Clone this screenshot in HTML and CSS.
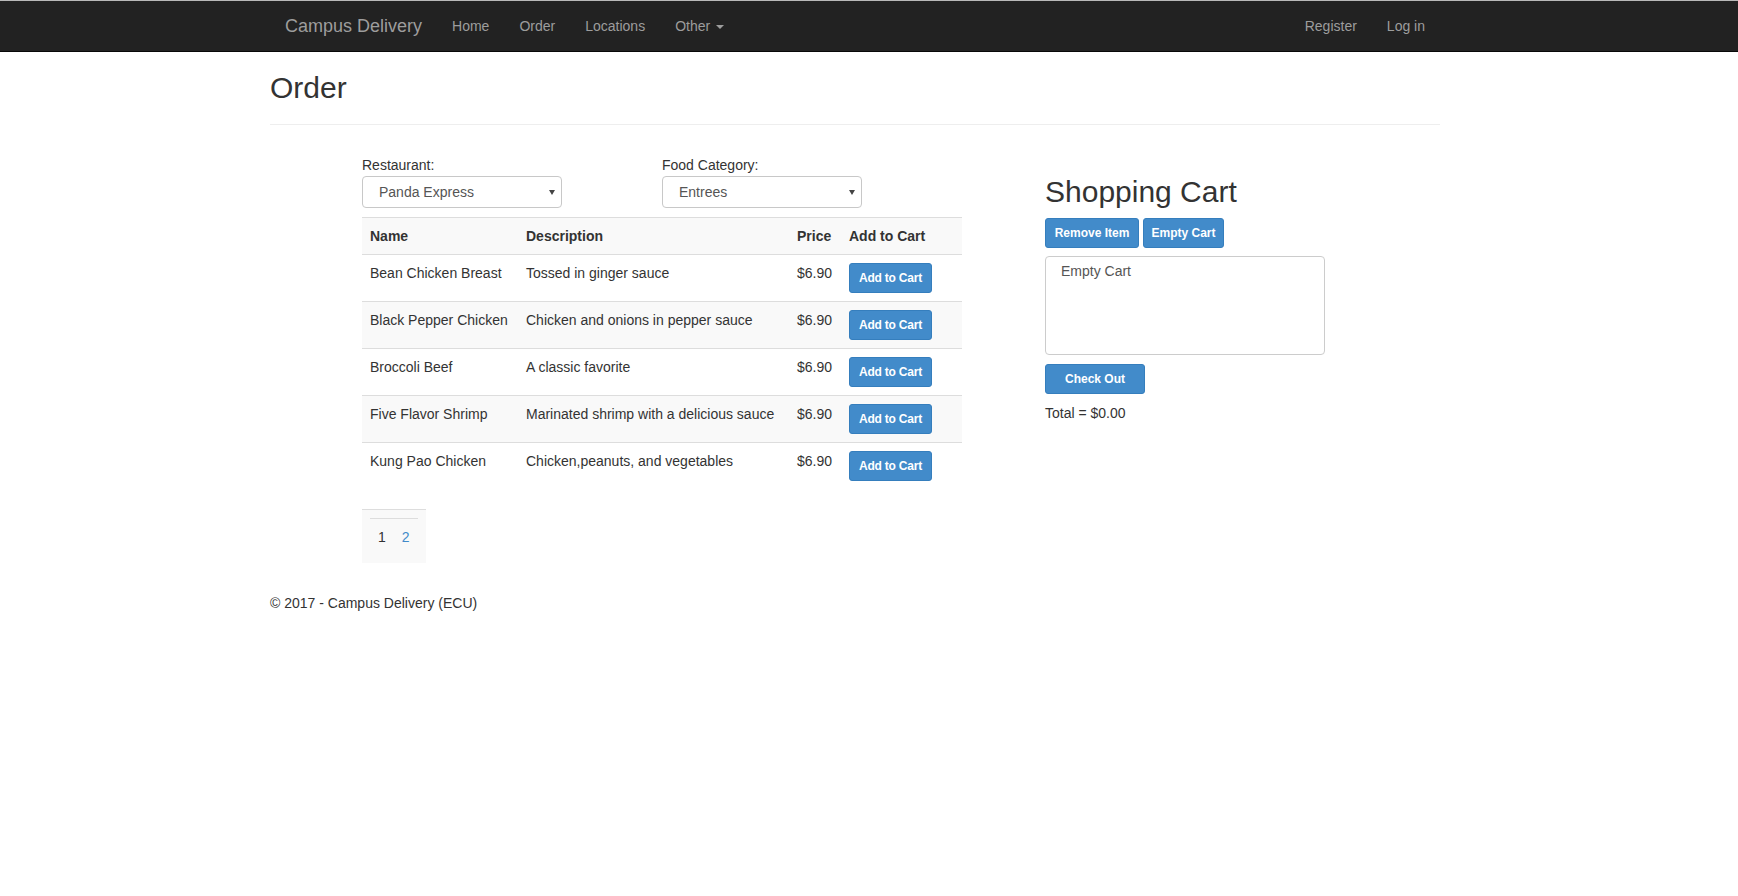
FILE: index.html
```html
<!DOCTYPE html>
<html lang="en">
<head>
<meta charset="utf-8">
<title>Order - Campus Delivery</title>
<link rel="stylesheet" href="styles.css">
</head>
<body>
<div class="topline"></div>
<nav class="navbar">
  <div class="container nav-inner">
    <a class="brand" href="#">Campus Delivery</a>
    <ul class="nav">
      <li><a href="#">Home</a></li>
      <li><a href="#">Order</a></li>
      <li><a href="#">Locations</a></li>
      <li><a href="#">Other <span class="caret"></span></a></li>
    </ul>
    <ul class="nav nav-right">
      <li><a href="#">Register</a></li>
      <li><a href="#">Log in</a></li>
    </ul>
  </div>
</nav>

<div class="container body-content">
  <h2 class="page-title">Order</h2>
  <hr class="rule">

  <div class="order-row">
    <div class="menu-col">
      <div class="filters">
        <div class="filter">
          <label class="filter-label">Restaurant:</label>
          <div class="select-box"><span class="select-text">Panda Express</span><span class="select-arrow"></span></div>
        </div>
        <div class="filter">
          <label class="filter-label">Food Category:</label>
          <div class="select-box"><span class="select-text">Entrees</span><span class="select-arrow"></span></div>
        </div>
      </div>

      <table class="menu-table">
        <colgroup>
          <col class="c-name"><col class="c-desc"><col class="c-price"><col class="c-add">
        </colgroup>
        <tbody>
          <tr class="striped"><th>Name</th><th>Description</th><th>Price</th><th>Add to Cart</th></tr>
          <tr><td>Bean Chicken Breast</td><td>Tossed in ginger sauce</td><td>$6.90</td><td><button class="btn btn-add">Add to Cart</button></td></tr>
          <tr class="striped"><td>Black Pepper Chicken</td><td>Chicken and onions in pepper sauce</td><td>$6.90</td><td><button class="btn btn-add">Add to Cart</button></td></tr>
          <tr><td>Broccoli Beef</td><td>A classic favorite</td><td>$6.90</td><td><button class="btn btn-add">Add to Cart</button></td></tr>
          <tr class="striped"><td>Five Flavor Shrimp</td><td>Marinated shrimp with a delicious sauce</td><td>$6.90</td><td><button class="btn btn-add">Add to Cart</button></td></tr>
          <tr><td>Kung Pao Chicken</td><td>Chicken,peanuts, and vegetables</td><td>$6.90</td><td><button class="btn btn-add">Add to Cart</button></td></tr>
        </tbody>
      </table>

      <div class="pager">
        <table class="pager-table">
          <tr><td class="page-current">1</td><td><a class="page-link" href="#">2</a></td></tr>
        </table>
      </div>
    </div>

    <div class="cart-col">
      <h2 class="cart-title">Shopping Cart</h2>
      <div class="cart-actions">
        <button class="btn btn-cart btn-remove">Remove Item</button>
        <button class="btn btn-cart btn-empty">Empty Cart</button>
      </div>
      <div class="cart-list">Empty Cart</div>
      <button class="btn btn-cart btn-checkout">Check Out</button>
      <p class="total">Total = $0.00</p>
    </div>
  </div>

  <footer class="footer">
    <p>&copy; 2017 - Campus Delivery (ECU)</p>
  </footer>
</div>
</body>
</html>
```

FILE: styles.css
```css
* { box-sizing: border-box; }

html, body {
  margin: 0;
  padding: 0;
}

body {
  font-family: "Liberation Sans", Arial, Helvetica, sans-serif;
  font-size: 14px;
  line-height: 20px;
  color: #333;
  background: #fff;
}

a { text-decoration: none; }

.topline {
  height: 1px;
  background: #b9b9b9;
}

.container {
  width: 1170px;
  margin-left: 270px;
}

/* Navbar */
.navbar {
  height: 50px;
  background: #222;
  box-shadow: 0 1px 0 #080808;
  position: relative;
  z-index: 1;
}

.nav-inner {
  display: flex;
  height: 50px;
}

.brand {
  display: block;
  padding: 15px;
  font-size: 18px;
  line-height: 20px;
  height: 50px;
  color: #9d9d9d;
}

.nav {
  display: flex;
  list-style: none;
  margin: 0;
  padding: 0;
}

.nav a {
  display: block;
  padding: 15px;
  line-height: 20px;
  color: #9d9d9d;
}

.nav-right {
  margin-left: auto;
}

.caret {
  display: inline-block;
  width: 0;
  height: 0;
  margin-left: 2px;
  vertical-align: middle;
  border-top: 4px solid #9d9d9d;
  border-left: 4px solid transparent;
  border-right: 4px solid transparent;
}

/* Page heading */
.page-title {
  margin: 20px 0 10px;
  font-size: 30px;
  line-height: 33px;
  font-weight: normal;
  color: #333;
}

.rule {
  margin: 20px 0;
  border: 0;
  border-top: 1px solid #eee;
  height: 0;
}

/* Order layout */
.order-row {
  display: flex;
  padding-left: 92px;
}

.menu-col {
  width: 600px;
  padding-top: 10px;
}

.filters {
  display: flex;
  gap: 100px;
}

.filter {
  width: 200px;
}

.filter-label {
  display: block;
  height: 20px;
  line-height: 20px;
  font-weight: normal;
}

.select-box {
  margin-top: 1px;
  height: 32px;
  border: 1px solid #c8c8c8;
  border-radius: 4px;
  display: flex;
  align-items: center;
  padding: 0 6px 0 16px;
  color: #555;
  background: #fff;
}

.select-text {
  flex: 1;
  line-height: 20px;
}

.select-arrow {
  width: 0;
  height: 0;
  border-top: 5px solid #444;
  border-left: 3px solid transparent;
  border-right: 3px solid transparent;
  margin-top: 1px;
}

/* Table */
.menu-table {
  width: 600px;
  margin-top: 9px;
  margin-bottom: 20px;
  border-collapse: collapse;
  table-layout: fixed;
}

.c-name { width: 156px; }
.c-desc { width: 271px; }
.c-price { width: 52px; }
.c-add { width: 121px; }

.menu-table th,
.menu-table td {
  padding: 8px;
  line-height: 20px;
  vertical-align: top;
  text-align: left;
  border-top: 1px solid #ddd;
  white-space: nowrap;
}

.menu-table th {
  font-weight: bold;
}

.striped {
  background: #f9f9f9;
}

/* Buttons */
.btn {
  display: inline-block;
  font-family: inherit;
  font-size: 12px;
  font-weight: bold;
  line-height: 18px;
  padding: 5px 0;
  height: 30px;
  border-radius: 3px;
  border: 1px solid #357ebd;
  background: #428bca;
  color: #fff;
  cursor: pointer;
  text-align: center;
  white-space: nowrap;
}

.btn-add { width: 83px; letter-spacing: -0.2px; }

.btn-remove { width: 94px; }
.btn-empty { width: 81px; margin-left: 1px; }
.btn-checkout { width: 100px; display: block; margin-top: 9px; }

/* Pager */
.pager {
  width: 64px;
  background: #f9f9f9;
  border-top: 1px solid #ddd;
  padding: 8px;
}

.pager-table {
  border-collapse: collapse;
}

.pager-table td {
  padding: 8px;
  line-height: 20px;
  border-top: 1px solid #ddd;
}

.page-current { color: #333; }
.page-link { color: #428bca; }

/* Cart */
.cart-col {
  margin-left: 83px;
  width: 280px;
}

.cart-title {
  margin: 30px 0 10px;
  font-size: 30px;
  line-height: 33px;
  font-weight: normal;
  color: #333;
  white-space: nowrap;
}

.cart-actions {
  display: flex;
  gap: 3px;
}

.cart-list {
  margin-top: 8px;
  width: 280px;
  height: 99px;
  border: 1px solid #ccc;
  border-radius: 4px;
  padding: 4px 15px;
  color: #555;
  line-height: 20px;
}

.total {
  margin: 9px 0 0;
  line-height: 20px;
}

/* Footer */
.footer {
  margin-top: 30px;
}

.footer p {
  margin: 0 0 10px;
}
```
